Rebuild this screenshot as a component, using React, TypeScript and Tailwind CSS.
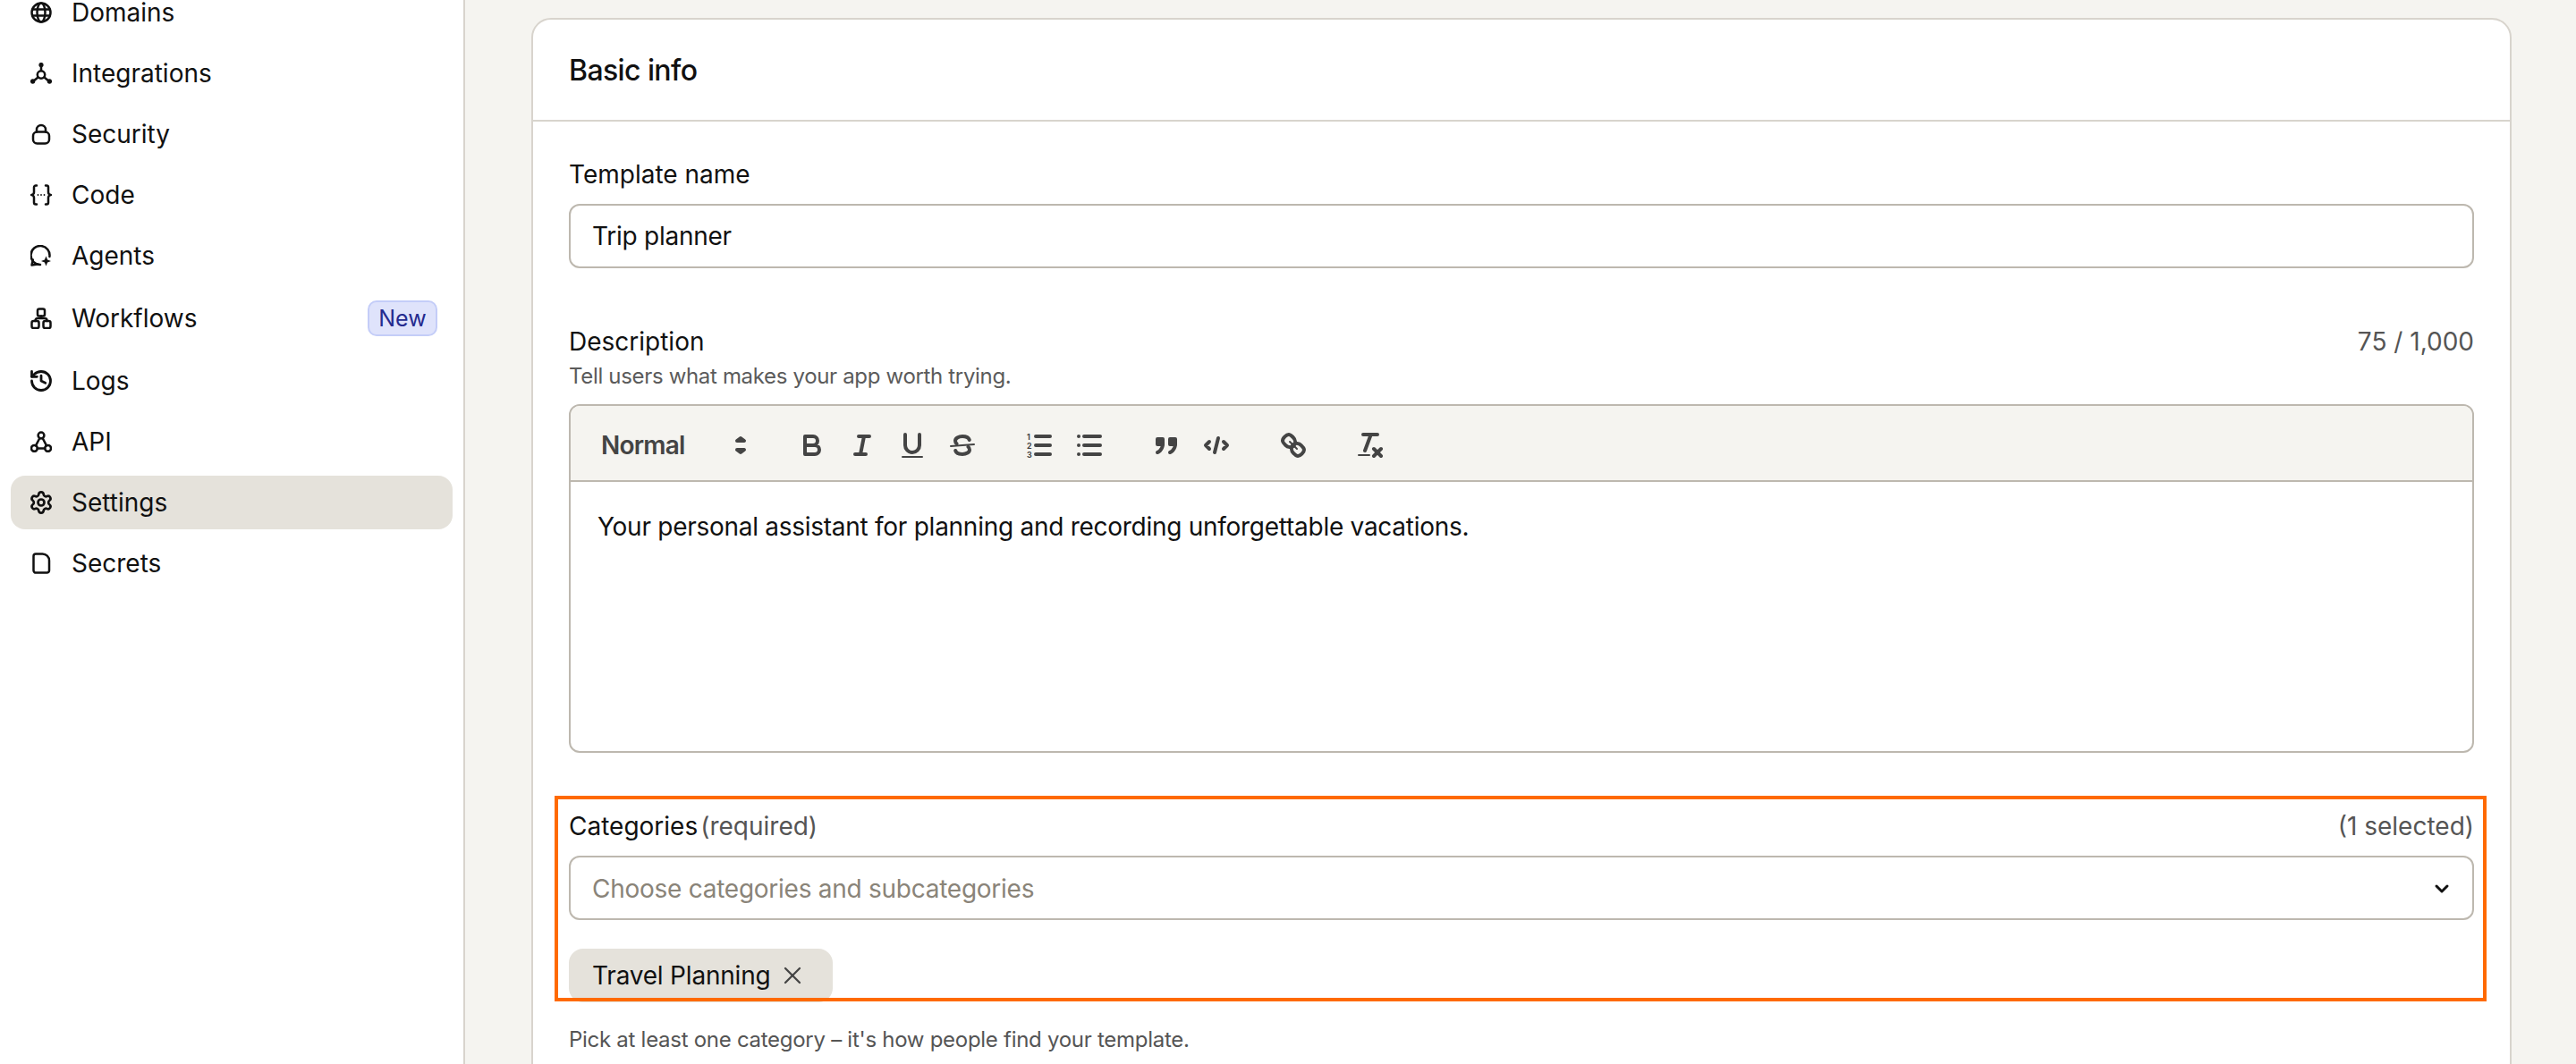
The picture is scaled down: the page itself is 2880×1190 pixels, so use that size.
import { ChevronDown, History, Settings, X } from "lucide-react";
import type { ReactNode } from "react";

const stroke = {
  fill: "none",
  stroke: "currentColor",
  strokeWidth: 2.5,
  strokeLinecap: "round" as const,
  strokeLinejoin: "round" as const,
};

function Icon({ children }: { children: ReactNode }) {
  return (
    <svg viewBox="0 0 24 24" className="w-6 h-6 shrink-0" {...stroke}>
      {children}
    </svg>
  );
}

const navItems: { label: string; icon: ReactNode; badge?: string; active?: boolean }[] = [
  {
    label: "Domains",
    icon: (
      <Icon>
        <circle cx="12" cy="12" r="10.5" />
        <ellipse cx="12" cy="12" rx="4.5" ry="10.5" />
        <path d="M2.5 8.5h19M2.5 15.5h19" />
      </Icon>
    ),
  },
  {
    label: "Integrations",
    icon: (
      <Icon>
        <circle cx="12" cy="13.5" r="4.2" />
        <path d="M12 3v6M3 21l5.5-4.5M21 21l-5.5-4.5" />
        <circle cx="12" cy="2.6" r="1.4" fill="currentColor" />
        <circle cx="2.6" cy="21" r="1.4" fill="currentColor" />
        <circle cx="21.4" cy="21" r="1.4" fill="currentColor" />
      </Icon>
    ),
  },
  {
    label: "Security",
    icon: (
      <Icon>
        <rect x="3" y="9.5" width="18" height="13" rx="4.5" />
        <path d="M7 9.5V7a5 5 0 0 1 10 0v2.5" />
      </Icon>
    ),
  },
  {
    label: "Code",
    icon: (
      <Icon>
        <path d="M7 1.5H6a2 2 0 0 0-2 2V9a3 3 0 0 1-3 3 3 3 0 0 1 3 3v5.5a2 2 0 0 0 2 2h1" />
        <path d="M17 1.5h1a2 2 0 0 1 2 2V9a3 3 0 0 0 3 3 3 3 0 0 0-3 3v5.5a2 2 0 0 1-2 2h-1" />
        <path d="M8.5 12h.01M12 12h.01M15.5 12h.01" strokeWidth="1.8" />
      </Icon>
    ),
  },
  {
    label: "Agents",
    icon: (
      <Icon>
        <path d="M11 22a10.5 10.5 0 1 1 10.4-9" />
        <path d="M2.8 16.5L1.5 22.5l6.5-1" />
        <path
          d="M17.5 12.5l1.6 3.9 3.9 1.6-3.9 1.6-1.6 3.9-1.6-3.9L12 18l3.9-1.6z"
          fill="currentColor"
          stroke="none"
        />
      </Icon>
    ),
  },
  {
    label: "Workflows",
    badge: "New",
    icon: (
      <Icon>
        <rect x="8" y="1.5" width="8" height="8" rx="2" />
        <rect x="1.5" y="15" width="8" height="8" rx="2" />
        <rect x="14.5" y="15" width="8" height="8" rx="2" />
        <path d="M12 9.5V12M5.5 15v-.5a2.5 2.5 0 0 1 2.5-2.5h8a2.5 2.5 0 0 1 2.5 2.5v.5" />
      </Icon>
    ),
  },
  {
    label: "Logs",
    icon: <History className="w-7 h-7 -mx-0.5 shrink-0" strokeWidth={2.4} />,
  },
  {
    label: "API",
    icon: (
      <Icon>
        <circle cx="12" cy="5" r="3.4" />
        <circle cx="4.4" cy="19.4" r="3.4" />
        <circle cx="19.6" cy="19.4" r="3.4" />
        <path d="M10.4 8l-4.4 8.4M13.6 8l4.4 8.4M7.8 19.4h8.4" />
      </Icon>
    ),
  },
  {
    label: "Settings",
    active: true,
    icon: <Settings className="w-7 h-7 -mx-0.5 shrink-0" strokeWidth={2.3} />,
  },
  {
    label: "Secrets",
    icon: (
      <Icon>
        <path d="M6 1.5h7.5a7.5 7.5 0 0 1 7.5 7.5v11a2.5 2.5 0 0 1-2.5 2.5h-12A2.5 2.5 0 0 1 3.5 20V4A2.5 2.5 0 0 1 6 1.5z" />
      </Icon>
    ),
  },
];

function Sidebar() {
  return (
    <aside className="w-[520px] shrink-0 bg-white border-r-2 border-[#d8d4cd] px-3">
      <nav className="-mt-4 flex flex-col gap-2">
        {navItems.map((item) => (
          <div
            key={item.label}
            className={`flex items-center gap-[22px] pl-[22px] pr-[17px] rounded-2xl text-[#111111] ${
              item.badge ? "h-16" : "h-[60px]"
            } ${item.active ? "bg-[#e5e2db]" : ""}`}
          >
            {item.icon}
            <span className="flex-1 text-[28px] leading-7">{item.label}</span>
            {item.badge && (
              <span className="w-[78px] h-10 flex items-center justify-center rounded-[10px] border-2 border-[#c4cdf8] bg-[#dfe3fb] text-[#252b8f] text-[25px] pt-[2px]">
                {item.badge}
              </span>
            )}
          </div>
        ))}
      </nav>
    </aside>
  );
}

// Quill snow icons, 18 unit grid
function ToolIcon({ children }: { children: ReactNode }) {
  return (
    <span className="w-14 h-9 flex items-center justify-center">
      <svg viewBox="0 0 18 18" className="w-9 h-9" {...stroke} strokeWidth={2}>
        {children}
      </svg>
    </span>
  );
}

function Toolbar() {
  return (
    <div className="h-[85px] flex items-center pl-4 pt-1 bg-[#f5f4f0] border-b-2 border-[#bdb8af] rounded-t-[10px] text-[#444444]">
      <div className="w-[196px] mr-[30px] flex items-center justify-between pl-[18px] pr-1">
        <span className="text-[28px] font-semibold tracking-[-0.8px]">Normal</span>
        <svg viewBox="0 0 18 18" className="w-9 h-9" fill="currentColor" stroke="currentColor" strokeWidth={2} strokeLinejoin="round">
          <polygon points="7 11.5 9 13 11 11.5" />
          <polygon points="7 6.5 9 5 11 6.5" />
        </svg>
      </div>
      <div className="flex mr-[30px]">
        <ToolIcon>
          <path d="M5 4h4.5a2.5 2.5 0 0 1 0 5H5zM5 9h5.5a2.5 2.5 0 0 1 0 5H5z" />
        </ToolIcon>
        <ToolIcon>
          <path d="M7 4h6M5 14h6M8 14l2-10" />
        </ToolIcon>
        <ToolIcon>
          <path d="M5 3v6a4 4 0 0 0 8 0V3" />
          <rect x="3" y="15" width="12" height="1" rx="0.5" fill="currentColor" stroke="none" />
        </ToolIcon>
        <ToolIcon>
          <path d="M15.5 8.5l-13 1" strokeWidth={1} />
          <path d="M12.9 6C12.5 4.8 11 4 9 4 6.8 4 5 5.1 5 6.5c0 .7.3 1.2.8 1.6M5.1 12c.4 1.2 1.9 2 3.9 2 2.2 0 4-1.1 4-2.5 0-.7-.3-1.2-.8-1.6" />
        </ToolIcon>
      </div>
      <div className="flex mr-[30px]">
        <ToolIcon>
          <path d="M7 4h8M7 9h8M7 14h8" />
          <text x="2" y="6" fontSize="4.4" fontWeight="700" fill="currentColor" stroke="none" fontFamily="Inter, sans-serif">1</text>
          <text x="2" y="11" fontSize="4.4" fontWeight="700" fill="currentColor" stroke="none" fontFamily="Inter, sans-serif">2</text>
          <text x="2" y="16" fontSize="4.4" fontWeight="700" fill="currentColor" stroke="none" fontFamily="Inter, sans-serif">3</text>
        </ToolIcon>
        <ToolIcon>
          <path d="M6 4h9M6 9h9M6 14h9" />
          <path d="M3 4h.01M3 9h.01M3 14h.01" />
        </ToolIcon>
      </div>
      <div className="flex mr-[30px]">
        <ToolIcon>
          <rect x="4" y="5.5" width="3" height="3" fill="currentColor" />
          <rect x="11" y="5.5" width="3" height="3" fill="currentColor" />
          <path d="M7 8c0 4-3 5-3 5M14 8c0 4-3 5-3 5" />
        </ToolIcon>
        <ToolIcon>
          <path d="M5 7L3 9l2 2M13 7l2 2-2 2M10 5l-2 8" />
        </ToolIcon>
      </div>
      <div className="flex mr-[30px]">
        <ToolIcon>
          <path d="M7 7l4 4" strokeWidth={1} />
          <path d="M8.9 4.6a3.5 3.5 0 0 1 .36 4.68A3.5 3.5 0 0 1 4.6 8.9C3.2 7.5 2 6.4 4.2 4.2S7.5 3.2 8.9 4.6z" />
          <path d="M13.4 9.1a3.5 3.5 0 0 0-4.68-.36 3.5 3.5 0 0 0 .36 4.68c1.4 1.4 2.5 2.5 4.68.36S14.8 10.5 13.4 9.1z" />
        </ToolIcon>
      </div>
      <div className="flex">
        <ToolIcon>
          <path d="M5 3h8M6 12l3.35-9M11 11l4 4M15 11l-4 4" />
          <rect x="2" y="14" width="7" height="1" rx="0.5" fill="currentColor" stroke="none" />
        </ToolIcon>
      </div>
    </div>
  );
}

export default function App() {
  return (
    <div className="h-[1190px] w-[2880px] overflow-hidden flex bg-[#f5f4f0] text-[#111111] font-['Inter',sans-serif]">
      <Sidebar />
      <main className="flex-1 pl-[74px] pr-[72px] pt-5">
        <section className="bg-white border-2 border-[#d8d4cd] rounded-[22px]">
          <header className="h-[114px] flex items-center px-10 pt-[2px] border-b-2 border-[#d8d4cd]">
            <h2 className="text-[32px] font-medium tracking-[-0.6px]">Basic info</h2>
          </header>
          <div className="px-10 pt-[39px] pb-20">
            <label className="block text-[28px] leading-10 mb-[13px]">Template name</label>
            <div className="h-[72px] flex items-center px-6 border-2 border-[#bdb8af] rounded-xl text-[28px] tracking-[-0.25px]">
              Trip planner
            </div>

            <div className="mt-[62px] flex justify-between text-[28px] leading-10">
              <label>Description</label>
              <span className="text-[#555555]">75 / 1,000</span>
            </div>
            <p className="mt-[3px] text-[24px] leading-8 text-[#5b5b5b] tracking-[-0.33px]">
              Tell users what makes your app worth trying.
            </p>
            <div className="mt-[15px] h-[390px] border-2 border-[#bdb8af] rounded-xl">
              <Toolbar />
              <p className="px-[30px] pt-[30px] text-[28px] leading-10 tracking-[-0.27px]">
                Your personal assistant for planning and recording unforgettable vacations.
              </p>
            </div>

            <div className="relative mt-[62px]">
              <div className="flex justify-between text-[28px] leading-10">
                <span>
                  Categories
                  <span className="ml-[3px] text-[#555555]">(required)</span>
                </span>
                <span className="text-[#555555]">(1 selected)</span>
              </div>
              <div className="mt-[13px] h-[72px] flex items-center justify-between pl-6 pr-[22px] pt-[2px] border-2 border-[#bdb8af] rounded-xl text-[28px] text-[#8a8479] tracking-[-0.26px]">
                Choose categories and subcategories
                <ChevronDown className="w-6 h-6 text-[#111111]" strokeWidth={3} />
              </div>
              <div className="mt-8 w-[295px] h-[60px] flex items-center gap-[9px] pl-[26px] rounded-2xl bg-[#e5e2db] text-[28px] tracking-[-0.2px]">
                Travel Planning
                <X className="w-8 h-8 text-[#444444]" strokeWidth={1.7} />
              </div>
              {/* highlight frame over the field */}
              <div className="absolute -left-4 -right-[14px] -top-[14px] bottom-px border-4 border-[#ff6a00]" />
            </div>
            <p className="mt-[26px] text-[24px] leading-8 text-[#555555] tracking-[-0.28px]">
              Pick at least one category – it's how people find your template.
            </p>
          </div>
        </section>
      </main>
    </div>
  );
}
